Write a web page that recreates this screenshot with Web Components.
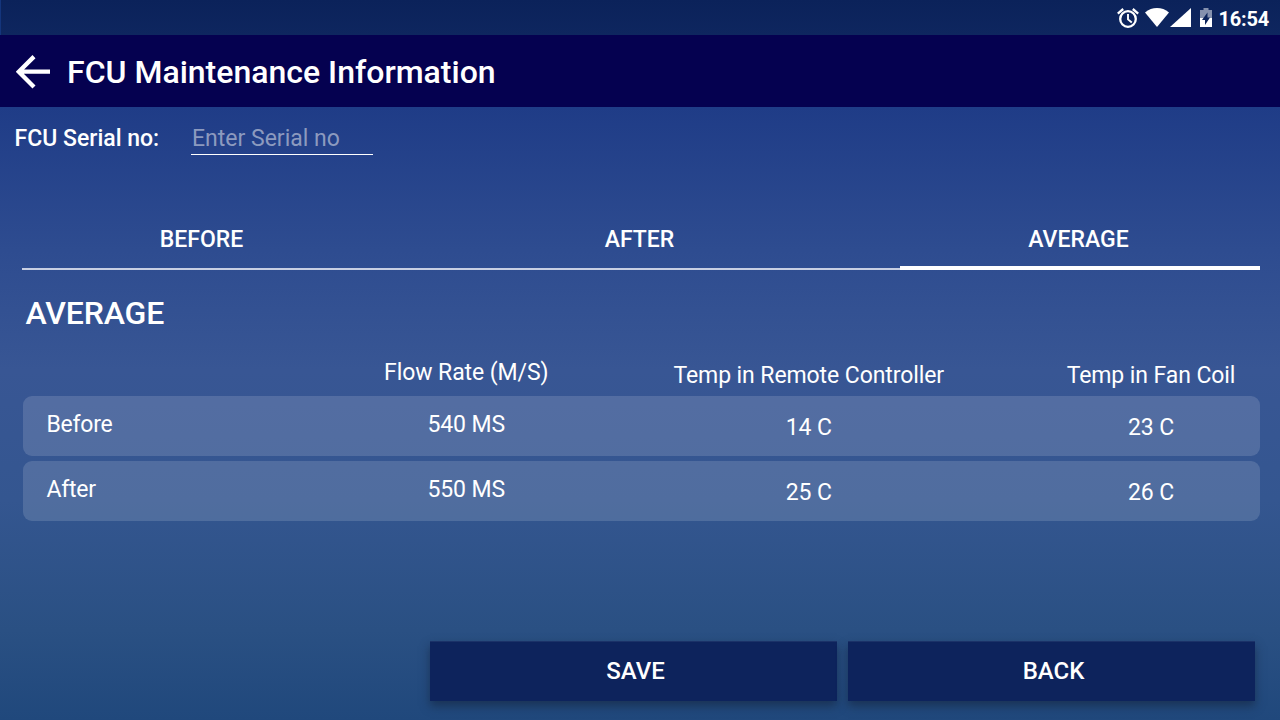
<!DOCTYPE html>
<html lang="en">
<head>
<meta charset="utf-8">
<title>FCU Maintenance Information</title>
<style>
html,body{margin:0;height:100%;overflow:hidden}
</style>
</head>
<body>
<fcu-screen>
  <status-bar slot="status" time="16:54"></status-bar>
  <app-bar slot="bar">FCU Maintenance Information</app-bar>
  <serial-field label="FCU Serial no:" placeholder="Enter Serial no"></serial-field>
  <tab-strip>
    <tab-item>BEFORE</tab-item>
    <tab-item>AFTER</tab-item>
    <tab-item selected>AVERAGE</tab-item>
  </tab-strip>
  <average-table heading="AVERAGE">
    <reading-row head><span slot="flow">Flow Rate (M/S)</span><span slot="remote">Temp in Remote Controller</span><span slot="coil">Temp in Fan Coil</span></reading-row>
    <reading-row>Before<span slot="flow">540 MS</span><span slot="remote">14 C</span><span slot="coil">23 C</span></reading-row>
    <reading-row>After<span slot="flow">550 MS</span><span slot="remote">25 C</span><span slot="coil">26 C</span></reading-row>
  </average-table>
  <action-button slot="actions">SAVE</action-button>
  <action-button slot="actions">BACK</action-button>
</fcu-screen>
<script>
const define = (name, html, setup) => {
  const template = document.createElement('template');
  template.innerHTML = html;
  customElements.define(name, class extends HTMLElement {
    connectedCallback() {
      if (this.shadowRoot) return;
      this.attachShadow({ mode: 'open' }).append(template.content.cloneNode(true));
      if (setup) setup(this, this.shadowRoot);
    }
  });
};

define('fcu-screen', `
<style>
:host{display:flex;flex-direction:column;height:720px;width:1280px;color:#fff;font-family:Roboto,sans-serif;font-size:23px;
background:linear-gradient(180deg,#19357f 0,#1f3c87 107px,#2e4c90 250px,#385694 370px,#345690 500px,#2a5083 630px,#20487c 720px)}
main{flex:1;display:flex;flex-direction:column}
footer{display:flex;gap:11px;height:60px;padding:0 25px 19px 430px}
</style>
<slot name="status"></slot><slot name="bar"></slot>
<main><slot></slot></main>
<footer><slot name="actions"></slot></footer>`);

define('status-bar', `
<style>
:host{display:flex;align-items:center;justify-content:flex-end;height:35px;box-sizing:border-box;padding:0 11px 0 0;background:linear-gradient(#0b225a,#0e265f);box-shadow:inset 1px 0 #14357c}
svg{display:block}
.alarm{margin-right:6px}.wifi{margin-right:1px}.cell{margin-right:9px}.battery{margin-right:6px}
span{font-size:20px;font-weight:700;line-height:24px;padding-top:2px;letter-spacing:-.2px}
</style>
<svg class="alarm" width="22" height="20" viewBox="0 0 22 20" fill="none" stroke="#fff" stroke-width="2.300"><circle cx="11" cy="11" r="7.800"/><path d="M11 6v5.400l3.800 3.200" stroke-width="1.900"/><path d="M.8 5.600 6.200 1M21.200 5.600 15.800 1"/></svg>
<svg class="wifi" width="24" height="19" viewBox="0 0 24 19" fill="#fff"><path d="M0 4.400C7-1.400 17-1.400 24 4.400L12 19z"/></svg>
<svg class="cell" width="21" height="19" viewBox="0 0 21 19" fill="#fff"><path d="M21 0v19H0z"/></svg>
<svg class="battery" width="12" height="19" viewBox="0 0 12 19"><path fill="#8591ae" d="M0 2h3.500V0h5v2H12v9H0z"/><path fill="#fff" d="M0 10h12v9H0z"/><path fill="#0c245c" d="M7.500 4.500v5H10L5 17v-5H2z"/></svg>
<span></span>`, (el, root) => { root.querySelector('span').textContent = el.getAttribute('time'); });

define('app-bar', `
<style>
:host{display:flex;align-items:center;height:72px;background:#050150;padding-left:16px}
svg{display:block;margin:1px 16px 0 0}
h1{margin:2px 0 0;font-size:32px;font-weight:500;line-height:40px;white-space:nowrap}
</style>
<svg width="35" height="34" viewBox="0 0 35 34" fill="none" stroke="#fff" stroke-width="4.300"><path d="M18 1.600 2.800 16.700 18 32M3 16.700h31"/></svg>
<h1><slot></slot></h1>`);

define('serial-field', `
<style>
:host{display:flex;height:48px;padding-left:14px}
label{box-sizing:border-box;width:177px;padding:18px 0 0 .6px;line-height:28px;font-weight:500;white-space:nowrap}
div{box-sizing:border-box;width:182px;height:48px;padding:18px 0 0 1px;line-height:28px;border-bottom:1px solid #fff;color:#8c9abf;white-space:nowrap}
</style>
<label></label><div></div>`, (el, root) => {
  root.querySelector('label').textContent = el.getAttribute('label');
  root.querySelector('div').textContent = el.getAttribute('placeholder');
});

define('tab-strip', `
<style>
:host{display:block;margin:53px 20px 0 22px;height:62px;box-sizing:border-box;background:linear-gradient(#c8cfe2,#c8cfe2) bottom/100% 2px no-repeat}
div{display:grid;grid-template-columns:359px 517px 2px 360px;height:100%}
::slotted([selected]){grid-column:4}
</style>
<div><slot></slot></div>`);

define('tab-item', `
<style>
:host{display:block;box-sizing:border-box;text-align:center;padding-top:18px;line-height:28px;font-weight:500;border-bottom:4px solid transparent}
:host([selected]){border-color:#fff;padding-right:3px}
</style>
<slot></slot>`);

define('average-table', `
<style>
:host{display:flex;flex-direction:column;padding:23px 20px 0 23px}
h2{margin:0 0 0 2.600px;font-size:32px;line-height:40px;font-weight:500;letter-spacing:-.16px}
</style>
<h2></h2><slot></slot>`, (el, root) => { root.querySelector('h2').textContent = el.getAttribute('heading'); });

define('reading-row', `
<style>
:host{display:grid;grid-template-columns:272px 342.500px 342.500px 1fr;box-sizing:border-box;height:60px;margin-bottom:5px;border-radius:9px;background:rgba(255,255,255,.14);line-height:28px;padding-top:15px;white-space:nowrap;letter-spacing:-.09px}
:host([head]){background:none;height:63px;margin:0;padding-top:26px}
div{text-align:center}
.name{text-align:left;padding-left:23.500px;letter-spacing:-.25px}
.low{padding-top:3px}
.coil{padding-left:62px}
</style>
<div class="name"><slot></slot></div>
<div><slot name="flow"></slot></div>
<div class="low"><slot name="remote"></slot></div>
<div class="low coil"><slot name="coil"></slot></div>`);

define('action-button', `
<style>
:host{flex:1;display:flex;align-items:center;justify-content:center;height:60px;background:#0d235c;box-shadow:inset 0 1px #1b3268,0 5px 9px rgba(20,35,60,.6);font-size:24px;font-weight:500}
span{padding-left:4px}
</style>
<span><slot></slot></span>`);
</script>
</body>
</html>
